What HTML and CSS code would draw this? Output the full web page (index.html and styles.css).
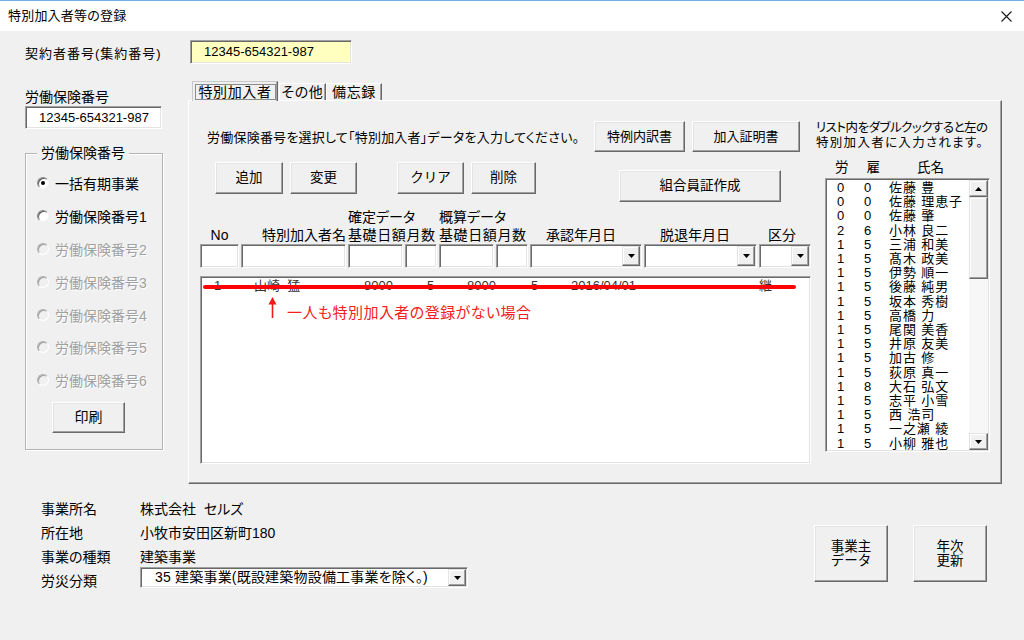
FILE: index.html
```html
<!DOCTYPE html>
<html lang="ja">
<head>
<meta charset="utf-8">
<title>特別加入者等の登録</title>
<link rel="stylesheet" href="styles.css">
</head>
<body>
<div class="window">
  <header class="titlebar">
    <span class="title">特別加入者等の登録</span>
    <svg class="close" width="11" height="11" viewBox="0 0 11 11"><path d="M0.5 0.5L10.5 10.5M10.5 0.5L0.5 10.5" stroke="#1a1a1a" stroke-width="1.1" fill="none"/></svg>
  </header>
  <main class="client">
    <div class="contract">
      <span class="contract-label">契約者番号(集約番号)</span>
      <div class="sunken yellow">12345-654321-987</div>
    </div>
    <div class="main">
      <aside class="leftcol">
        <div class="ins-label">労働保険番号</div>
        <div class="sunken ins-field">12345-654321-987</div>
        <div class="group">
          <span class="legend">労働保険番号</span>
          <ul class="radios">
            <li class="radio-item"><span class="radio checked"></span>一括有期事業</li>
            <li class="radio-item"><span class="radio"></span>労働保険番号1</li>
            <li class="radio-item disabled"><span class="radio"></span>労働保険番号2</li>
            <li class="radio-item disabled"><span class="radio"></span>労働保険番号3</li>
            <li class="radio-item disabled"><span class="radio"></span>労働保険番号4</li>
            <li class="radio-item disabled"><span class="radio"></span>労働保険番号5</li>
            <li class="radio-item disabled"><span class="radio"></span>労働保険番号6</li>
          </ul>
          <button class="btn print">印刷</button>
        </div>
      </aside>
      <section class="tabs">
        <div class="tabstrip">
          <div class="tab sel"><span>特別加入者</span></div>
          <div class="tab t2">その他</div>
          <div class="tab t3">備忘録</div>
        </div>
        <div class="panel">
          <div class="pleft">
            <div class="row-a">
              <span class="instr">労働保険番号を選択して「特別加入者」データを入力してください。</span>
              <button class="btn b-tokurei">特例内訳書</button>
              <button class="btn b-kanyu">加入証明書</button>
            </div>
            <div class="row-b">
              <button class="btn b-add">追加</button>
              <button class="btn b-chg">変更</button>
              <button class="btn b-clr">クリア</button>
              <button class="btn b-del">削除</button>
              <button class="btn b-card">組合員証作成</button>
            </div>
            <div class="cols colhead">
              <span class="h-no">No</span>
              <span class="h-name">特別加入者名</span>
              <span class="h-k1">確定データ</span>
              <span class="h-k2">基礎日額月数</span>
              <span class="h-g1">概算データ</span>
              <span class="h-g2">基礎日額月数</span>
              <span class="h-sho">承認年月日</span>
              <span class="h-dat">脱退年月日</span>
              <span class="h-kbn">区分</span>
            </div>
            <div class="cols inputs">
              <div class="sunken"></div>
              <div class="sunken"></div>
              <div class="sunken"></div>
              <div class="sunken"></div>
              <div class="sunken"></div>
              <div class="sunken"></div>
              <div class="sunken combo"><span class="dd"><svg width="7" height="4" viewBox="0 0 7 4"><path d="M0 0H7L3.5 4Z" fill="#000"/></svg></span></div>
              <div class="sunken combo"><span class="dd"><svg width="7" height="4" viewBox="0 0 7 4"><path d="M0 0H7L3.5 4Z" fill="#000"/></svg></span></div>
              <div class="sunken combo"><span class="dd"><svg width="7" height="4" viewBox="0 0 7 4"><path d="M0 0H7L3.5 4Z" fill="#000"/></svg></span></div>
            </div>
            <div class="sunken list">
              <div class="lrow">
                <span>1</span><span>山崎&nbsp;&nbsp;猛</span><span>8000</span><span>5</span><span>8000</span><span>5</span><span>2016/04/01</span><span>継</span>
              </div>
              <div class="strike"></div>
              <div class="annot">
                <svg width="9" height="21" viewBox="0 0 9 21"><path d="M4.5 6V21" stroke="#f01818" stroke-width="1.6"/><path d="M0.5 7.5L4.5 0L8.5 7.5Z" fill="#f01818"/></svg>
                <span class="annot-text">一人も特別加入者の登録がない場合</span>
              </div>
            </div>
          </div>
          <div class="pright">
            <div class="note"><span class="note1">リスト内をダブルクックすると左の</span><span class="note2">特別加入者に入力されます。</span></div>
            <div class="lhead"><span>労</span><span class="lh-ko">雇</span><span class="lh-name">氏名</span></div>
            <div class="sunken rlist">
              <div class="rrows">
                <div class="rrow"><span>0</span><span>0</span><span>佐藤 豊</span></div>
                <div class="rrow"><span>0</span><span>0</span><span>佐藤 理恵子</span></div>
                <div class="rrow"><span>0</span><span>0</span><span>佐藤 肇</span></div>
                <div class="rrow"><span>2</span><span>6</span><span>小林 良二</span></div>
                <div class="rrow"><span>1</span><span>5</span><span>三浦 和美</span></div>
                <div class="rrow"><span>1</span><span>5</span><span>髙木 政美</span></div>
                <div class="rrow"><span>1</span><span>5</span><span>伊勢 順一</span></div>
                <div class="rrow"><span>1</span><span>5</span><span>後藤 純男</span></div>
                <div class="rrow"><span>1</span><span>5</span><span>坂本 秀樹</span></div>
                <div class="rrow"><span>1</span><span>5</span><span>高橋 力</span></div>
                <div class="rrow"><span>1</span><span>5</span><span>尾関 美香</span></div>
                <div class="rrow"><span>1</span><span>5</span><span>井原 友美</span></div>
                <div class="rrow"><span>1</span><span>5</span><span>加古 修</span></div>
                <div class="rrow"><span>1</span><span>5</span><span>荻原 真一</span></div>
                <div class="rrow"><span>1</span><span>8</span><span>大石 弘文</span></div>
                <div class="rrow"><span>1</span><span>5</span><span>志平 小雪</span></div>
                <div class="rrow"><span>1</span><span>5</span><span>西 浩司</span></div>
                <div class="rrow"><span>1</span><span>5</span><span>一之瀬 綾</span></div>
                <div class="rrow"><span>1</span><span>5</span><span>小柳 雅也</span></div>
              </div>
              <div class="sb">
                <span class="sbbtn"><svg width="7" height="4" viewBox="0 0 7 4"><path d="M3.5 0L7 4H0Z" fill="#000"/></svg></span>
                <span class="thumb"></span>
                <span class="track"></span>
                <span class="sbbtn"><svg width="7" height="4" viewBox="0 0 7 4"><path d="M0 0H7L3.5 4Z" fill="#000"/></svg></span>
              </div>
            </div>
          </div>
        </div>
      </section>
    </div>
    <div class="bottom">
      <div class="info">
        <span>事業所名</span><span>株式会社&nbsp;&nbsp;セルズ</span>
        <span>所在地</span><span>小牧市安田区新町180</span>
        <span>事業の種類</span><span>建築事業</span>
        <span>労災分類</span>
        <div class="sunken combo-big"><span class="cb-text">35 建築事業(既設建築物設備工事業を除く。)</span><span class="dd"><svg width="7" height="4" viewBox="0 0 7 4"><path d="M0 0H7L3.5 4Z" fill="#000"/></svg></span></div>
      </div>
      <div class="bbtns">
        <button class="btn">事業主<br>データ</button>
        <button class="btn">年次<br>更新</button>
      </div>
    </div>
  </main>
</div>
</body>
</html>
```
FILE: styles.css
```css
* { box-sizing: border-box; }
html, body { margin: 0; padding: 0; }
body {
  width: 1024px;
  height: 640px;
  overflow: hidden;
  background: #f0f0f0;
  font-family: "Liberation Sans", "Noto Sans CJK JP", sans-serif;
  font-size: 13px;
  color: #000;
  font-feature-settings: "palt" 1;
}

.titlebar {
  height: 31px;
  border-top: 1px solid #74aee6;
  background: #fff;
  display: flex;
  align-items: center;
  justify-content: space-between;
  padding: 0 12px 0 8px;
}
.title { font-size: 13px; line-height: 16px; letter-spacing: 0.2px; }
.close { display: block; }

.client { height: 609px; padding: 9px 0 0 25px; }

.sunken {
  background: #fff;
  border: 1px solid;
  border-color: #a0a0a0 #fff #fff #a0a0a0;
  box-shadow: inset 1px 1px 0 #696969, inset -1px -1px 0 #e3e3e3;
}

.contract { display: flex; align-items: center; height: 24px; }
.contract-label { width: 165px; font-size: 13px; letter-spacing: 1px; white-space: nowrap; }
.yellow {
  width: 162px;
  height: 24px;
  background: #ffffc0;
  padding-left: 13px;
  font-size: 13px;
  line-height: 22px;
}

.main { display: flex; align-items: flex-start; margin-top: 16px; }

.leftcol { width: 138px; }
.ins-label { margin-top: 9px; font-size: 14px; line-height: 16px; }
.ins-field {
  margin-top: 1px;
  width: 137px;
  height: 23px;
  padding-left: 13px;
  font-size: 13px;
  line-height: 21px;
}
.group {
  margin-top: 24px;
  height: 297px;
  border: 1px solid #b4b4b4;
  box-shadow: 1px 1px 0 #fff, inset 1px 1px 0 #fff;
}
.legend {
  display: block;
  width: max-content;
  margin: -9px 0 0 11px;
  padding: 0 4px;
  background: #f0f0f0;
  font-size: 14px;
  line-height: 16px;
}
.radios { list-style: none; margin: 6px 0 0; padding: 0; }
.radio-item {
  display: flex;
  align-items: center;
  gap: 6px;
  height: 32.8px;
  padding-left: 11px;
  font-size: 14px;
}
.radio {
  width: 12px;
  height: 12px;
  border-radius: 50%;
  background: #fff;
  border: 1px solid;
  border-color: #8a8a8a #f4f4f4 #f4f4f4 #8a8a8a;
  box-shadow: inset 1px 1px 0 #5a5a5a;
  display: flex;
  align-items: center;
  justify-content: center;
}
.radio.checked::after {
  content: "";
  width: 4px;
  height: 4px;
  border-radius: 50%;
  background: #000;
}
.radio-item.disabled { color: #a0a0a0; text-shadow: 1px 1px 0 #fff; }
.radio-item.disabled .radio { background: #f0f0f0; border-color: #b0b0b0 #fff #fff #b0b0b0; box-shadow: inset 1px 1px 0 #a0a0a0; }

.btn {
  font-family: inherit;
  font-size: 13px;
  color: #000;
  background: #f0f0f0;
  border: 1px solid;
  border-color: #fff #696969 #696969 #fff;
  box-shadow: inset -1px -1px 0 #a0a0a0, inset 1px 1px 0 #e3e3e3;
  padding: 0;
  margin: 0;
  border-radius: 0;
  line-height: 1.2;
}
.print { display: block; margin: 5px 0 0 26px; width: 73px; height: 31px; font-size: 14px; }

.tabs { margin-left: 25px; width: 814px; }
.tabstrip { height: 20px; display: flex; align-items: flex-end; padding-left: 4px; }
.tab {
  height: 17px;
  border: 1px solid;
  border-bottom: 0;
  border-color: #fff #696969 transparent #fff;
  box-shadow: inset -1px 0 0 #a0a0a0;
  background: #f0f0f0;
  font-size: 14px;
  line-height: 15px;
  display: flex;
  align-items: center;
  justify-content: center;
  white-space: nowrap;
}
.tab.sel {
  width: 86px;
  height: 20px;
  margin-bottom: -1px;
  position: relative;
  z-index: 1;
  border-color: #c8c8c8 #696969 transparent #c8c8c8;
}
.tab.sel span { border: 1px solid #8c8c8c; padding: 0 3px; line-height: 14px; letter-spacing: 0.6px; }
.tab.t2 { width: 47px; margin-left: 1px; letter-spacing: 0.6px; }
.tab.t3 { width: 56px; letter-spacing: 0.6px; }

.panel {
  height: 384px;
  border: 1px solid;
  border-color: #fff #696969 #696969 #fff;
  box-shadow: inset -1px -1px 0 #a0a0a0;
  display: flex;
  align-items: flex-start;
}

.pleft { margin-left: 11px; width: 611px; padding-top: 20px; }
.row-a { display: flex; align-items: center; height: 31px; }
.instr { width: 394px; padding-left: 7px; font-size: 13px; letter-spacing: 0.22px; white-space: nowrap; }
.b-tokurei { width: 91px; height: 31px; }
.b-kanyu { width: 108px; height: 31px; margin-left: 7px; }
.row-b { display: flex; align-items: flex-start; height: 40px; margin-top: 10px; padding-left: 15px; }
.row-b .btn { height: 32px; font-size: 13.5px; }
.b-add { width: 68px; }
.b-chg { width: 67px; margin-left: 7px; }
.b-clr { width: 67px; margin-left: 40px; }
.b-del { width: 65px; margin-left: 7px; }
.b-card { width: 162px; margin-left: 83px; margin-top: 8px; }

.cols {
  display: grid;
  grid-template-columns: 39px 105px 55px 32px 55px 32px 112px 113px 52px;
  column-gap: 2px;
}
.colhead {
  margin-top: 7px;
  height: 35px;
  grid-template-rows: 17.5px 17.5px;
  font-size: 14px;
  line-height: 17.5px;
  white-space: nowrap;
}
.h-no { grid-column: 1; grid-row: 2; text-align: center; }
.h-name { grid-column: 2; grid-row: 2; text-align: right; }
.h-k1 { grid-column: 3 / 5; grid-row: 1; }
.h-k2 { grid-column: 3 / 5; grid-row: 2; letter-spacing: 0.6px; }
.h-g1 { grid-column: 5 / 7; grid-row: 1; }
.h-g2 { grid-column: 5 / 7; grid-row: 2; letter-spacing: 0.6px; }
.h-sho { grid-column: 7; grid-row: 2; padding-left: 16px; }
.h-dat { grid-column: 8; grid-row: 2; padding-left: 16px; }
.h-kbn { grid-column: 9; grid-row: 2; padding-left: 9px; }

.inputs { height: 24px; }
.inputs > div { height: 24px; }
.combo { display: flex; justify-content: flex-end; padding: 1px; }
.dd {
  width: 18px;
  height: 100%;
  background: #f0f0f0;
  border: 1px solid;
  border-color: #e3e3e3 #696969 #696969 #e3e3e3;
  box-shadow: inset -1px -1px 0 #a0a0a0, inset 1px 1px 0 #fff;
  display: flex;
  align-items: center;
  justify-content: center;
}
.dd svg, .sbbtn svg { display: block; }

.list { position: relative; margin-top: 8px; height: 188px; }
.lrow {
  display: grid;
  grid-template-columns: 40px 110px 63px 40px 64px 40px 188px auto;
  padding: 1px 0 0 13px;
  font-size: 13px;
  line-height: 16px;
  color: #333;
  white-space: nowrap;
}
.strike {
  position: absolute;
  left: 2px;
  top: 8px;
  width: 593px;
  height: 4px;
  border-radius: 2px;
  background: #ff0000;
}
.annot { position: absolute; left: 67px; top: 20px; display: flex; align-items: flex-start; }
.annot svg { display: block; }
.annot-text { margin: 7px 0 0 10px; font-size: 15px; line-height: 18px; letter-spacing: 0.45px; color: #f52020; white-space: nowrap; }

.pright { margin-left: 5px; width: 184px; padding-top: 20px; }
.note { font-size: 12.5px; line-height: 15px; white-space: nowrap; }
.note1, .note2 { display: block; }
.note1 { letter-spacing: -0.5px; }
.note2 { letter-spacing: 1.3px; }
.lhead { display: flex; margin-top: 10px; padding-left: 19px; font-size: 13.5px; line-height: 14px; }
.lh-ko { margin-left: 18px; }
.lh-name { margin-left: 37px; }
.rlist { margin: 3px 0 0 9px; width: 165px; height: 274px; display: flex; }
.rrows { flex: 1; padding: 2px 0 0 11px; font-size: 13px; line-height: 14.2px; overflow: hidden; }
.rrow { display: grid; grid-template-columns: 27px 25px auto; white-space: nowrap; }
.rrow span:last-child { letter-spacing: 0.9px; }
.sb { width: 19px; display: flex; flex-direction: column; margin: 1px 1px 1px 0; background: #f7f7f7; }
.sbbtn, .thumb {
  background: #f0f0f0;
  border: 1px solid;
  border-color: #e3e3e3 #696969 #696969 #e3e3e3;
  box-shadow: inset -1px -1px 0 #a0a0a0, inset 1px 1px 0 #fff;
}
.sbbtn { height: 17px; display: flex; align-items: center; justify-content: center; }
.thumb { height: 82px; }
.track { flex: 1; }

.bottom { display: flex; margin-top: 12px; padding-left: 16px; }
.info {
  display: grid;
  grid-template-columns: 99px auto;
  grid-auto-rows: 24px;
  align-items: center;
  font-size: 14px;
  white-space: nowrap;
}
.combo-big {
  width: 328px;
  height: 21px;
  align-self: start;
  margin-top: -1px;
  display: flex;
  justify-content: space-between;
  padding: 1px;
}
.cb-text { padding-left: 13px; line-height: 17px; font-size: 14px; letter-spacing: 0.2px; }
.combo-big .dd { width: 18px; }
.bbtns { display: flex; gap: 25px; margin: 29px 37px 0 auto; }
.bbtns .btn { width: 74px; height: 57px; font-size: 13.5px; line-height: 13.5px; }
```
